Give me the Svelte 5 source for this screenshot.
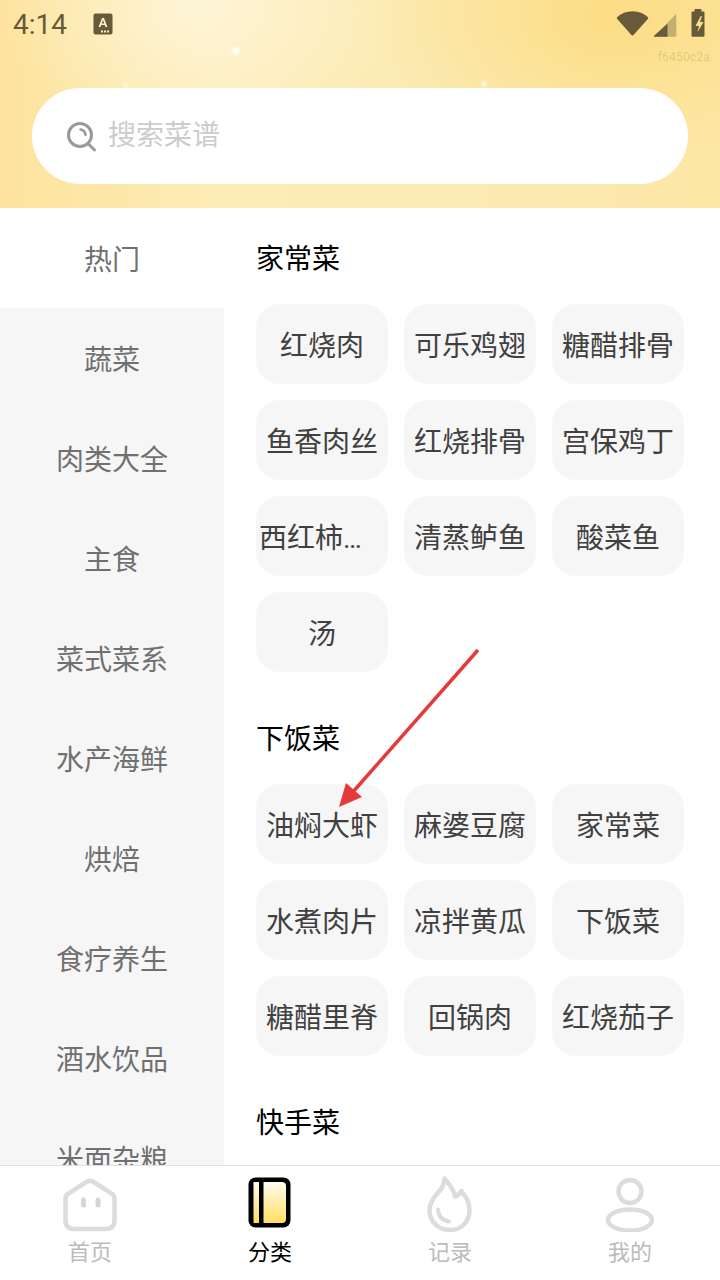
<script>
  const cats = ['热门','蔬菜','肉类大全','主食','菜式菜系','水产海鲜','烘焙','食疗养生','酒水饮品','米面杂粮'];
  const sections = [
    { title: '家常菜', items: ['红烧肉','可乐鸡翅','糖醋排骨','鱼香肉丝','红烧排骨','宫保鸡丁','西红柿炒鸡蛋','清蒸鲈鱼','酸菜鱼','汤'] },
    { title: '下饭菜', items: ['油焖大虾','麻婆豆腐','家常菜','水煮肉片','凉拌黄瓜','下饭菜','糖醋里脊','回锅肉','红烧茄子'] },
    { title: '快手菜', items: [] }
  ];
</script>

<div class="page">
  <header class="header">
    <i class="spark s1"></i><i class="spark s2"></i><i class="spark s3"></i>
    <div class="status">
      <span class="time">4:14</span>
      <svg class="a-icon" width="20" height="22" viewBox="0 0 20 22">
        <rect x="0.5" y="0.5" width="19" height="21" rx="2" fill="#665a39"/>
        <path d="M5.600 14 9 5h2l3.400 9h-2l-.6-1.900H8.200L7.600 14zM8.800 10.500h2.400L10 7z" fill="#fdf0c8"/>
        <rect x="11" y="17.500" width="2" height="2" fill="#fdf0c8"/><rect x="14" y="17.500" width="2" height="2" fill="#fdf0c8"/><rect x="8" y="17.500" width="2" height="2" fill="#fdf0c8"/>
      </svg>
      <span class="spacer"></span>
      <svg class="st-icons" width="94" height="28" viewBox="0 0 94 28">
        <path d="M1 9.500C5 5.500 10.500 3.500 16.500 3.500S28 5.500 32 9.500Q32.500 10.300 32 11L17.800 27Q16.500 28.300 15.200 27L1 11Q.5 10.300 1 9.500z" fill="#665a39" transform="translate(0 -1.200)"/>
        <path d="M38 27.800 59.500 5.500Q60.300 4.800 60.300 6V27a.8.8 0 0 1-.8.8z" fill="#c4ae70"/>
        <path d="M38.800 27.800H51.500V14.800L38 26.800Q37.500 27.800 38.800 27.800z" fill="#665a39"/>
        <path d="M73 3.500a1 1 0 0 1 1-1h2V.8a.8.8 0 0 1 .8-.8h5.400a.8.8 0 0 1 .8.8v1.700h2a1 1 0 0 1 1 1V26.800a1 1 0 0 1-1 1H74a1 1 0 0 1-1-1z" fill="#665a39" transform="translate(2.500 0)"/>
        <path d="M84.800 7.500 79.500 17.500H83L81.500 23.800 87.500 13.500H84L86 7.500z" fill="#fcdf8d" transform="translate(0 -.5)"/>
      </svg>
    </div>
    <div class="hash">f6450c2a</div>
    <div class="search">
      <svg class="search-icon" width="32" height="32" viewBox="0 0 32 32" fill="none" stroke="#999" stroke-width="3" stroke-linecap="round">
        <circle cx="14" cy="14" r="11.500"/>
        <path d="M22.500 23 28.500 29"/>
        <path d="M14.500 8.500A6 6 0 0 1 19.500 14" stroke-width="2.500"/>
      </svg>
      <span class="placeholder">搜索菜谱</span>
    </div>
  </header>

  <main class="main">
    <nav class="side">
      {#each cats as c, i}
        <div class="cat" class:active={i === 0}>{c}</div>
      {/each}
    </nav>
    <div class="content">
      {#each sections as s}
        <section class="section">
          <h2 class="title">{s.title}</h2>
          <div class="grid">
            {#each s.items as it}
              <div class="chip"><span class="chip-text">{it}</span></div>
            {/each}
          </div>
        </section>
      {/each}
    </div>
  </main>

  <footer class="tabs">
    <div class="tab">
      <svg class="ico" width="56" height="56" viewBox="0 0 56 56" fill="none" stroke="#dcdcdc" stroke-width="4.500">
        <path d="M3.500 22.500Q3.500 19.500 6 17.800L25 5.500Q28 3.800 31 5.500L50 17.800Q52.500 19.500 52.500 22.500V44Q52.500 53 44 53H12Q3.500 53 3.500 44z"/>
        <path d="M21.500 24V29M36 24V29" stroke-width="5" stroke-linecap="round" stroke="#d6d6d6"/>
      </svg>
      <span class="tab-label">首页</span>
    </div>
    <div class="tab on">
      <svg class="ico" width="44" height="52" viewBox="0 0 44 52">
        <defs>
          <linearGradient id="bk" x1="0" y1="0" x2="0" y2="1">
            <stop offset="0" stop-color="#fffdf0"/>
            <stop offset="1" stop-color="#ffdf60"/>
          </linearGradient>
        </defs>
        <rect x="0.500" y="0.500" width="42" height="50" rx="7" fill="#000"/>
        <rect x="5.500" y="5" width="5.500" height="41" fill="url(#bk)"/>
        <path d="M15.500 5H34Q38 5 38 9V42Q38 46 34 46H15.500z" fill="url(#bk)"/>
      </svg>
      <span class="tab-label">分类</span>
    </div>
    <div class="tab">
      <svg class="ico" width="56" height="56" viewBox="0 0 56 56" fill="none" stroke="#dcdcdc" stroke-width="4.500" stroke-linecap="round" stroke-linejoin="round">
        <path d="M22.500 2.500C27 8 32 13 33 20.500 36 19.500 38 17.500 39.500 15 44 21 47.500 26 47.500 34 47.500 46 39 54 28 54S7.500 46 7.500 34.500C7.500 24 15 19 19 13 21.500 9.500 22.500 6.500 22.500 2.500z"/>
        <path d="M16 33.500C16.500 40 20 44.500 27 45.500" stroke-width="4"/>
      </svg>
      <span class="tab-label">记录</span>
    </div>
    <div class="tab">
      <svg class="ico" width="56" height="56" viewBox="0 0 56 56" fill="none" stroke="#dcdcdc" stroke-width="4.500">
        <circle cx="28" cy="15.500" r="11.500"/>
        <ellipse cx="28" cy="44" rx="22" ry="10.500"/>
      </svg>
      <span class="tab-label">我的</span>
    </div>
  </footer>

  <svg class="arrow" width="720" height="1280" viewBox="0 0 720 1280">
    <path d="M478 650 352 793" stroke="#e53a3c" stroke-width="3.500" fill="none"/>
    <path d="M339 807 346 783 362 797z" fill="#e53a3c"/>
  </svg>
</div>

<style>
  :global(body) { margin: 0; background: #fff; }
  .page {
    position: relative;
    width: 720px;
    height: 1280px;
    overflow: hidden;
    display: flex;
    flex-direction: column;
    background: #fff;
    font-family: Roboto, "Noto Sans CJK SC", sans-serif;
  }
  .header {
    position: relative;
    height: 208px;
    flex: none;
    box-sizing: border-box;
    padding: 88px 32px 24px;
    background:
      radial-gradient(ellipse 200px 140px at 200px 10px, rgba(254,246,218,.9), rgba(254,246,218,0) 100%),
      radial-gradient(ellipse 240px 150px at 610px 15px, rgba(252,219,125,.85), rgba(252,219,125,0) 100%),
      linear-gradient(90deg, #fde39d 0%, #fdecb6 30%, #fbeab3 65%, #fde7a6 100%);
  }
  .spark { position: absolute; border-radius: 50%; background: #fffdf0; }
  .s1 { left: 232px; top: 47px; width: 8px; height: 8px; filter: blur(1px); }
  .s2 { left: 123px; top: 83px; width: 5px; height: 5px; filter: blur(1px); opacity: .7; }
  .s3 { left: 481px; top: 81px; width: 6px; height: 6px; filter: blur(1px); opacity: .7; }
  .status {
    position: absolute;
    left: 13px;
    right: 13px;
    top: 9px;
    height: 32px;
    display: flex;
    align-items: center;
    color: #665a39;
  }
  .time { font-size: 28px; line-height: 32px; width: 80px; }
  .a-icon { margin-top: -2px; }
  .spacer { flex: 1; }
  .st-icons { margin-right: -2px; margin-left: 2px; margin-top: -5px; position: relative; left: 1px; }
  .hash {
    position: absolute;
    right: 10px;
    top: 50px;
    font-size: 12px;
    line-height: 14px;
    letter-spacing: .2px;
    color: rgba(102,90,57,.2);
  }
  .search {
    height: 96px;
    border-radius: 48px;
    background: #fff;
    display: flex;
    align-items: center;
    padding-left: 34px;
  }
  .search-icon { margin-top: 2px; }
  .placeholder { margin-left: 10px; font-size: 28px; line-height: 40px; color: #ccc; }
  .main { flex: 1; min-height: 0; display: flex; overflow: hidden; }
  .side { width: 224px; flex: none; background: #f6f6f6; }
  .cat {
    height: 100px;
    box-sizing: border-box;
    padding-top: 6px;
    display: flex;
    align-items: center;
    justify-content: center;
    font-size: 28px;
    line-height: 40px;
    color: #707070;
  }
  .cat.active { background: #fff; }
  .content { flex: 1; padding: 0 36px 0 32px; overflow: hidden; }
  .section { margin-bottom: 16px; }
  .title {
    margin: 0;
    height: 96px;
    box-sizing: border-box;
    padding-top: 32px;
    font-size: 28px;
    line-height: 40px;
    font-weight: 400;
    color: #000;
  }
  .grid { display: grid; grid-template-columns: repeat(3, 132px); gap: 16px; }
  .chip {
    height: 80px;
    border-radius: 24px;
    background: #f6f6f6;
    display: flex;
    align-items: center;
    justify-content: center;
    padding: 6px 3px 0;
    box-sizing: border-box;
    min-width: 0;
  }
  .chip-text {
    font-size: 28px;
    color: #404040;
    white-space: nowrap;
    overflow: hidden;
    text-overflow: ellipsis;
    line-height: 40px;
  }
  .tabs {
    flex: none;
    height: 115px;
    box-sizing: border-box;
    border-top: 1px solid #e0e0e0;
    background: #fff;
    display: grid;
    grid-template-columns: repeat(4, 1fr);
    position: relative;
  }
  .tab { display: flex; flex-direction: column; align-items: center; padding-top: 10px; }
  .ico { display: block; height: 56px; margin-bottom: 0; }
  .tab.on .ico { height: 52px; margin-top: 1px; margin-bottom: 3px; }
  .tab-label { font-size: 22px; line-height: 30px; margin-top: 6px; color: #bbb; }
  .tab.on .tab-label { color: #000; }
  .arrow { position: absolute; left: 0; top: 0; pointer-events: none; }
</style>
